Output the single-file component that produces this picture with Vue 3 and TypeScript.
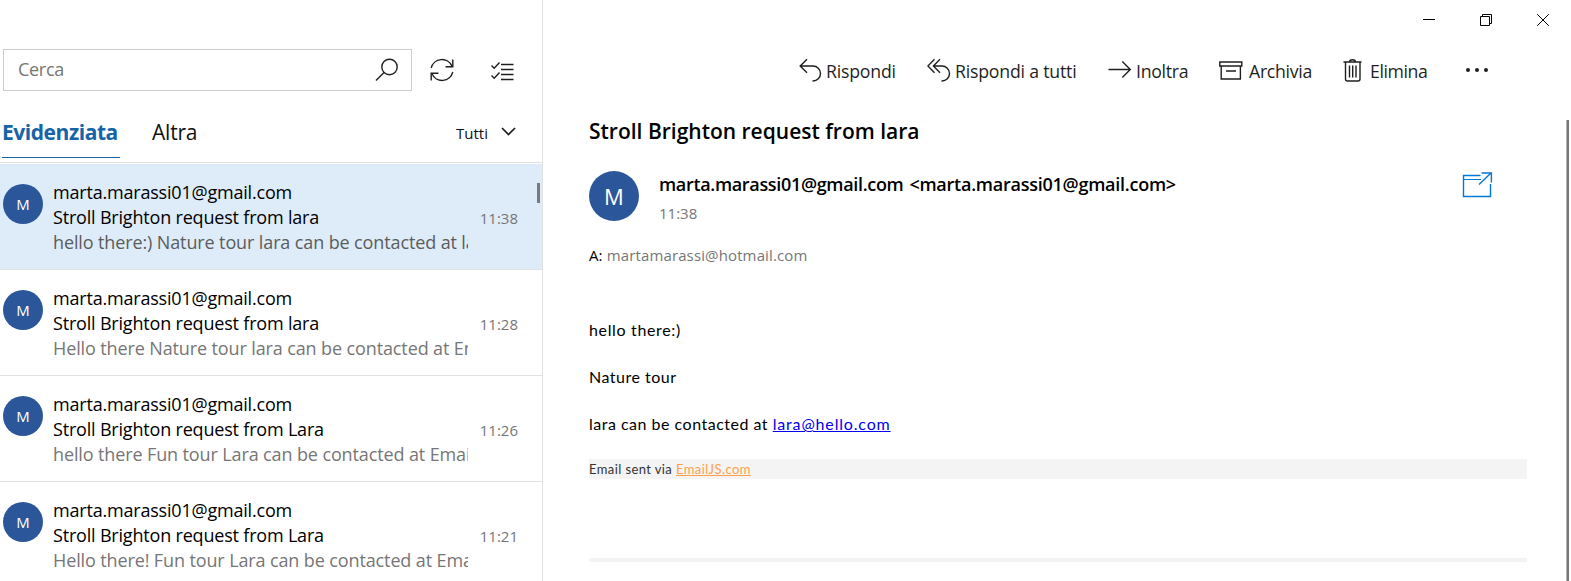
<script setup lang="ts">
import { ref } from 'vue'

interface Message {
  id: number
  sender: string
  subject: string
  preview: string
  time: string
}

const messages: Message[] = [
  { id: 1, sender: 'marta.marassi01@gmail.com', subject: 'Stroll Brighton request from lara', preview: 'hello there:) Nature tour lara can be contacted at la', time: '11:38' },
  { id: 2, sender: 'marta.marassi01@gmail.com', subject: 'Stroll Brighton request from lara', preview: 'Hello there Nature tour lara can be contacted at Em', time: '11:28' },
  { id: 3, sender: 'marta.marassi01@gmail.com', subject: 'Stroll Brighton request from Lara', preview: 'hello there Fun tour Lara can be contacted at Emai', time: '11:26' },
  { id: 4, sender: 'marta.marassi01@gmail.com', subject: 'Stroll Brighton request from Lara', preview: 'Hello there! Fun tour Lara can be contacted at Ema', time: '11:21' },
]

const selectedId = ref(1)
const search = ref('')
</script>

<template>
  <div class="mail">
    <aside class="list-pane">
      <div class="search-row">
        <label class="search">
          <input v-model="search" type="text" placeholder="Cerca" />
          <svg class="icon" width="24" height="24" viewBox="0 0 24 24">
            <circle cx="14.5" cy="9" r="7.7" />
            <path d="M9 14.6 1 22.6" />
          </svg>
        </label>
        <button class="refresh" aria-label="Sincronizza">
          <svg class="icon" width="24" height="24" viewBox="0 0 24 24">
            <path d="M1.2 10A11 11 0 0 1 22 8.2M22.8 14A11 11 0 0 1 2 15.8" />
            <path d="M22.8 1.5V8.8H15.5M1.2 22.5V15.2H8.5" />
          </svg>
        </button>
        <button class="select" aria-label="Seleziona">
          <svg class="icon" width="24" height="20" viewBox="0 0 24 20">
            <path d="M10 3.5H22.5M10 8.5H22.5M10 13.5H22.5M10 18.5H22.5" />
            <path d="M.5 4.5 3.2 7.2 8.5 1.5M.5 14.5 3.2 17.2 8.5 11.5" />
          </svg>
        </button>
      </div>

      <nav class="tabs">
        <a class="tab active">Evidenziata</a>
        <a class="tab other">Altra</a>
        <span class="filter">
          Tutti
          <svg class="icon chevron" width="15" height="9" viewBox="0 0 15 9"><path d="M1 1 7.5 7.5 14 1" /></svg>
        </span>
      </nav>

      <ul class="messages">
        <li v-for="m in messages" :key="m.id" :class="{ selected: m.id === selectedId }" @click="selectedId = m.id">
          <span class="avatar">M</span>
          <div class="summary">
            <div class="sender">{{ m.sender }}</div>
            <div class="subject">{{ m.subject }}</div>
            <div class="preview">{{ m.preview }}</div>
          </div>
          <time>{{ m.time }}</time>
        </li>
      </ul>
      <span class="list-thumb"></span>
    </aside>

    <main class="reader">
      <div class="window-controls">
        <svg class="win" width="12" height="12" viewBox="0 0 12 12"><path d="M0 5.5H12" /></svg>
        <svg class="win" width="12" height="12" viewBox="0 0 12 12"><path d="M.5 2.5H9.5V11.5H.5ZM2.5 2.5V.5H11.5V9.5H9.5" /></svg>
        <svg class="win" width="12" height="12" viewBox="0 0 12 12"><path d="M.2 .2 11.8 11.8M11.8 .2 .2 11.8" /></svg>
      </div>

      <div class="toolbar">
        <button class="reply">
          <svg class="icon" width="24" height="24" viewBox="0 0 24 24">
            <path d="M8 1.3 1.2 8 8 14.7M1.2 8H14A7.5 7.5 0 0 1 14 23H13.5" />
          </svg>
          <span>Rispondi</span>
        </button>
        <button class="reply-all">
          <svg class="icon" width="24" height="24" viewBox="0 0 24 24">
            <path d="M7.5 1.3 .9 8 7.5 14.7M13 1.3 6.4 8 13 14.7M6.4 8H15A7.5 7.5 0 0 1 15 23H14.5" />
          </svg>
          <span>Rispondi a tutti</span>
        </button>
        <button class="forward">
          <svg class="icon" width="24" height="24" viewBox="0 0 24 24">
            <path d="M.5 11.5H22.3M14.3 3.5 22.3 11.5 14.3 19.5" />
          </svg>
          <span>Inoltra</span>
        </button>
        <button class="archive">
          <svg class="icon" width="24" height="24" viewBox="0 0 24 24">
            <path d="M.8 4H22.8V8H.8ZM2.2 8V21H21.4V8M7 13H17" />
          </svg>
          <span>Archivia</span>
        </button>
        <button class="delete">
          <svg class="icon" width="20" height="24" viewBox="0 0 20 24">
            <path d="M.5 4H18.5M2.5 4V21Q2.5 23 4.5 23H15Q17 23 17 21V4M6.5 4Q6.5 1.7 9.5 1.7T12.5 4M6.5 7.5V19.5M9.7 7.5V19.5M13 7.5V19.5" />
          </svg>
          <span>Elimina</span>
        </button>
        <button class="more" aria-label="Altro">
          <svg width="22" height="4" viewBox="0 0 22 4"><circle cx="2" cy="2" r="2" /><circle cx="11" cy="2" r="2" /><circle cx="20" cy="2" r="2" /></svg>
        </button>
      </div>

      <article>
        <h1>Stroll Brighton request from lara</h1>
        <header class="from">
          <span class="avatar large">M</span>
          <div class="identity">
            <div class="name"><span>marta.marassi01@gmail.com</span><span>&lt;marta.marassi01@gmail.com&gt;</span></div>
            <div class="date">11:38</div>
          </div>
          <svg class="popout" width="32" height="28" viewBox="0 0 32 28">
            <path d="M18.5 4.5H1.5V25.5H28.5V13" />
            <path class="thin" d="M1.5 8.5H19" />
            <path d="M17 13.5 29 2M19.5 2H29.4V11.5" />
          </svg>
        </header>
        <div class="to">A: <span>martamarassi@hotmail.com</span></div>
        <section class="body">
          <p class="greeting">hello there:)</p>
          <p class="tour">Nature tour</p>
          <p class="contact">lara can be contacted at <a class="mailto">lara@hello.com</a></p>
          <div class="signature">Email sent via <a>EmailJS.com</a></div>
          <div class="divider"></div>
        </section>
      </article>
      <span class="reader-thumb"></span>
    </main>
  </div>
</template>

<style>
html,
body {
  overflow: hidden;
  background: #fff;
}
</style>

<style scoped>
.mail {
  display: flex;
  width: 1571px;
  height: 581px;
  overflow: hidden;
  background: #fff;
  color: #000;
  font-family: "Open Sans", "Noto Sans", sans-serif;
  font-size: 18px;
}

button {
  padding: 0;
  border: 0;
  background: none;
  font: inherit;
  color: #1f1f1f;
}

svg {
  display: block;
  flex: none;
}

.icon,
.win {
  fill: none;
  stroke: #1f1f1f;
  stroke-width: 1.4;
}

.win {
  stroke: #000;
  stroke-width: 1;
}

.list-pane {
  position: relative;
  flex: none;
  box-sizing: border-box;
  width: 543px;
  border-right: 1px solid #e2e2e2;
}

.search-row {
  display: flex;
  align-items: center;
  padding: 49px 0 0 3px;
}

.search {
  display: flex;
  align-items: center;
  box-sizing: border-box;
  width: 409px;
  height: 42px;
  padding: 0 12px 0 14px;
  border: 1px solid #ccc;
}

.search input {
  flex: 1;
  min-width: 0;
  padding: 0 0 2px;
  border: 0;
  outline: 0;
  background: none;
  font: inherit;
  letter-spacing: -0.3px;
}

.search input::placeholder {
  color: #767676;
  opacity: 1;
}

.refresh {
  margin-left: 18px;
}

.select {
  margin-left: 37px;
}

.select svg {
  margin-top: 1px;
}

.tabs {
  display: flex;
  box-sizing: border-box;
  height: 72px;
  padding: 22px 0 0 2px;
  border-bottom: 1px solid #e2e2e2;
  font-size: 21px;
  line-height: 38px;
}

.tab {
  box-sizing: border-box;
  height: 45px;
}

.active {
  width: 118px;
  border-bottom: 1px solid #1664a7;
  color: #1664a7;
  font-weight: 700;
  letter-spacing: -0.45px;
}

.other {
  margin-left: 32px;
  color: #111;
  letter-spacing: -0.2px;
}

.filter {
  display: flex;
  height: 38px;
  margin-left: auto;
  margin-right: 26px;
  gap: 13px;
  font-size: 15px;
  line-height: 41px;
  color: #111;
}

.chevron {
  margin-top: 14px;
  stroke-width: 1.7;
}

.messages {
  margin: 1px 0 0;
  padding: 0;
  list-style: none;
}

.messages li {
  display: flex;
  box-sizing: border-box;
  height: 106px;
  padding: 15px 24px 0 3px;
  border-bottom: 1px solid #e2e2e2;
}

.messages li.selected {
  background: #deecf9;
}

.avatar {
  flex: none;
  width: 40px;
  height: 40px;
  margin-top: 5px;
  border-radius: 50%;
  background: #2b579a;
  color: #fff;
  font-size: 15px;
  line-height: 41px;
  text-align: center;
}

.summary {
  width: 415px;
  margin: 1px 0 0 10px;
  overflow: hidden;
  line-height: 25px;
  white-space: nowrap;
}

.sender {
  letter-spacing: -0.2px;
}

.subject {
  letter-spacing: -0.19px;
}

.preview {
  color: #767676;
  letter-spacing: -0.12px;
}

.selected .preview,
.selected time {
  color: #5c5c5c;
}

.messages time {
  margin: 27px 0 0 auto;
  color: #767676;
  font-size: 15px;
  line-height: 25px;
}

.list-thumb {
  position: absolute;
  top: 183px;
  right: 2px;
  width: 3px;
  height: 20px;
  background: #7a7a7a;
}

.reader {
  position: relative;
  flex: 1;
}

.window-controls {
  display: flex;
  justify-content: flex-end;
  gap: 45px;
  height: 14px;
  padding: 14px 22px 0 0;
}

.toolbar {
  display: flex;
  align-items: center;
  height: 24px;
  margin-top: 30px;
  padding-left: 256px;
  font-size: 17.7px;
}

.toolbar button {
  display: flex;
  align-items: center;
  flex: none;
  gap: 3px;
  height: 24px;
  line-height: 27px;
  white-space: nowrap;
}

.toolbar button span {
  margin-top: 3px;
}

.reply {
  width: 128px;
  letter-spacing: -0.2px;
}

.toolbar .reply-all {
  width: 181px;
  gap: 4px;
  letter-spacing: -0.2px;
}

.toolbar .forward {
  width: 111px;
  gap: 4px;
  letter-spacing: -0.3px;
}

.toolbar .archive {
  width: 124px;
  gap: 6px;
  letter-spacing: -0.3px;
}

.toolbar .delete {
  width: 123px;
  gap: 7px;
  letter-spacing: -0.4px;
}

.more svg {
  fill: #1f1f1f;
}

article {
  width: 938px;
  padding: 35px 0 0 46px;
}

h1 {
  margin: 0;
  font-size: 21px;
  font-weight: 600;
  line-height: 28px;
}

.from {
  display: flex;
  margin-top: 26px;
}

.avatar.large {
  width: 50px;
  height: 50px;
  margin-top: 0;
  font-size: 22px;
  line-height: 50px;
}

.identity {
  margin-left: 20px;
}

.name {
  display: flex;
  gap: 6px;
  font-weight: 600;
  line-height: 27px;
  letter-spacing: -0.33px;
}

.name span + span {
  letter-spacing: -0.25px;
}

.date {
  margin-top: 3px;
  color: #767676;
  font-size: 15px;
  line-height: 24px;
}

.popout {
  margin: 0 33px 0 auto;
  fill: none;
  stroke: #0078d7;
  stroke-width: 1.4;
}

.popout .thin {
  stroke-width: 1;
}

.to {
  margin-top: 18px;
  font-size: 15px;
  line-height: 24px;
  letter-spacing: 0.13px;
}

.to span {
  color: #767676;
}

.body {
  margin-top: 51px;
  font-family: Lato, "Open Sans", sans-serif;
  font-size: 16px;
  letter-spacing: 0.5px;
}

.body p {
  margin: 0 0 23px;
  line-height: 24px;
}

.greeting {
  letter-spacing: 0.65px;
}

.body a {
  text-decoration: underline;
}

.mailto {
  color: #0000ee;
  letter-spacing: 0.83px;
}

.signature {
  height: 20px;
  margin-top: 17px;
  background: #f4f4f4;
  color: #333;
  font-size: 13px;
  line-height: 20px;
  letter-spacing: 0.4px;
}

.signature a {
  color: #ff9f4a;
}

.divider {
  height: 4px;
  margin-top: 79px;
  background: #f4f4f4;
}

.reader-thumb {
  position: absolute;
  top: 120px;
  right: 2px;
  bottom: 0;
  width: 2px;
  border-left: 1px solid #b5b5b5;
  background: #767676;
}
</style>
